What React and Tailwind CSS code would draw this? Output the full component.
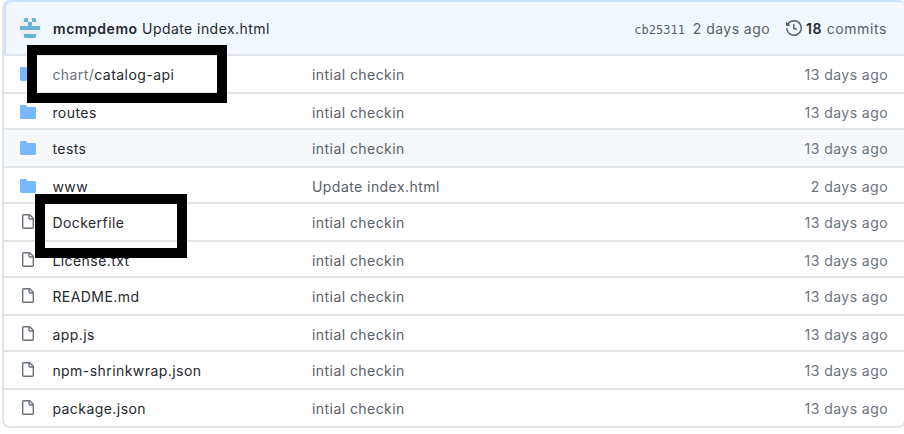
const files = [
  { dir: true, prefix: "chart/", name: "catalog-api" },
  { dir: true, name: "routes" },
  { dir: true, name: "tests", hover: true },
  { dir: true, name: "www", message: "Update index.html", age: "2 days ago" },
  { name: "Dockerfile" },
  { name: "License.txt" },
  { name: "README.md" },
  { name: "app.js" },
  { name: "npm-shrinkwrap.json" },
  { name: "package.json" },
];

function FolderIcon() {
  return (
    <svg viewBox="0 0 16 14" className="h-[14px] w-4 fill-[#79b8ff]">
      <path d="M1.4 0A1.4 1.4 0 0 0 0 1.4v11.2A1.4 1.4 0 0 0 1.4 14h13.2a1.4 1.4 0 0 0 1.4-1.4V3.3A1.4 1.4 0 0 0 14.6 2H8c-.2 0-.4-.1-.5-.3L6.7.7C6.3.3 5.9 0 5.3 0z" />
    </svg>
  );
}

function FileIcon() {
  return (
    <svg viewBox="0 0 12 15" className="h-[15px] w-3 fill-none stroke-[#6a737d] stroke-[1.4]">
      <path d="M7.7.7H1.7a1 1 0 0 0-1 1v11.6a1 1 0 0 0 1 1h8.6a1 1 0 0 0 1-1V4.3z" strokeLinejoin="round" />
      <path d="M7 .9v3.1a1 1 0 0 0 1 1h3.2" />
    </svg>
  );
}

function HistoryIcon() {
  return (
    <svg viewBox="0 0 16 16" className="h-4 w-4 fill-[#586069]">
      <path
        fillRule="evenodd"
        d="M1.643 3.143L.427 1.927A.25.25 0 000 2.104V5.75c0 .138.112.25.25.25h3.646a.25.25 0 00.177-.427L2.715 4.215a6.5 6.5 0 11-1.18 4.458.75.75 0 10-1.493.154 8.001 8.001 0 101.6-5.684zM7.75 4a.75.75 0 01.75.75v2.992l2.028.812a.75.75 0 01-.557 1.392l-2.5-1A.75.75 0 017 8.25v-3.5A.75.75 0 017.75 4z"
      />
    </svg>
  );
}

function Avatar() {
  return (
    <svg viewBox="0 0 22 22" className="h-[22px] w-[22px] rounded-full bg-[#eeeeee] fill-[#6ab2da]">
      <path d="M5 1h4v4H5zM13 1h4v4h-4zM9 5h4v4H9zM1 9h20v4H1zM5 17h12v4H5z" />
    </svg>
  );
}

export default function App() {
  return (
    <div className="relative h-[434px] w-[904px] overflow-hidden bg-white font-['Inter',sans-serif] text-sm leading-5 tracking-[0.44px] text-[#586069]">
      <div className="ml-[2px] h-[428px] w-[904px] rounded-lg border-2 border-t-0 border-[#e1e4e8]">
        <header className="flex h-14 items-center rounded-t-md border-b-2 border-[#e1e4e8] bg-[#f1f8ff] pl-[15px] pr-[17px] pt-[2px] shadow-[inset_2px_2px_0_#c8e1ff]">
          <Avatar />
          <span className="ml-[12px] mt-[2px] whitespace-nowrap text-[#24292e]">
            <b className="font-semibold tracking-[0.55px]">mcmpdemo</b> Update index.html
          </span>
          <span className="ml-auto mt-[3px] font-['DejaVu_Sans_Mono',monospace] text-[12px] tracking-normal">cb25311</span>
          <span className="ml-2 mt-[2px]">2 days ago</span>
          <span className="ml-4"><HistoryIcon /></span>
          <span className="ml-[4px] mt-[2px] tracking-[0.6px]"><b className="font-semibold text-[#24292e]">18</b> commits</span>
        </header>
        {files.map((file, i) => (
          <div
            key={file.name}
            className={`flex items-start border-[#e1e4e8] pr-4 pt-[9px] ${
              i === 9 ? "h-9" : i % 2 ? "h-9 border-b-2" : "h-[38px] border-b-2"
            } ${file.hover ? "bg-[#f6f8fa]" : ""}`}
          >
            <span className={file.dir ? "ml-4 mt-[2px] w-8" : "ml-[18px] mt-px w-[30px]"}>
              {file.dir ? <FolderIcon /> : <FileIcon />}
            </span>
            <span className="w-[260px] pl-[0.4px] text-[#24292e]">
              {file.prefix && <span className="text-[#6a737d]">{file.prefix}</span>}
              {file.name}
            </span>
            <span>{file.message || "intial checkin"}</span>
            <span className="ml-auto text-[#6a737d]">{file.age || "13 days ago"}</span>
          </div>
        ))}
      </div>
      <div className="absolute left-[27px] top-[45px] h-[58px] w-[200px] border-[10px] border-black" />
      <div className="absolute left-[35px] top-[194px] h-16 w-[152px] border-[10px] border-black" />
    </div>
  );
}
